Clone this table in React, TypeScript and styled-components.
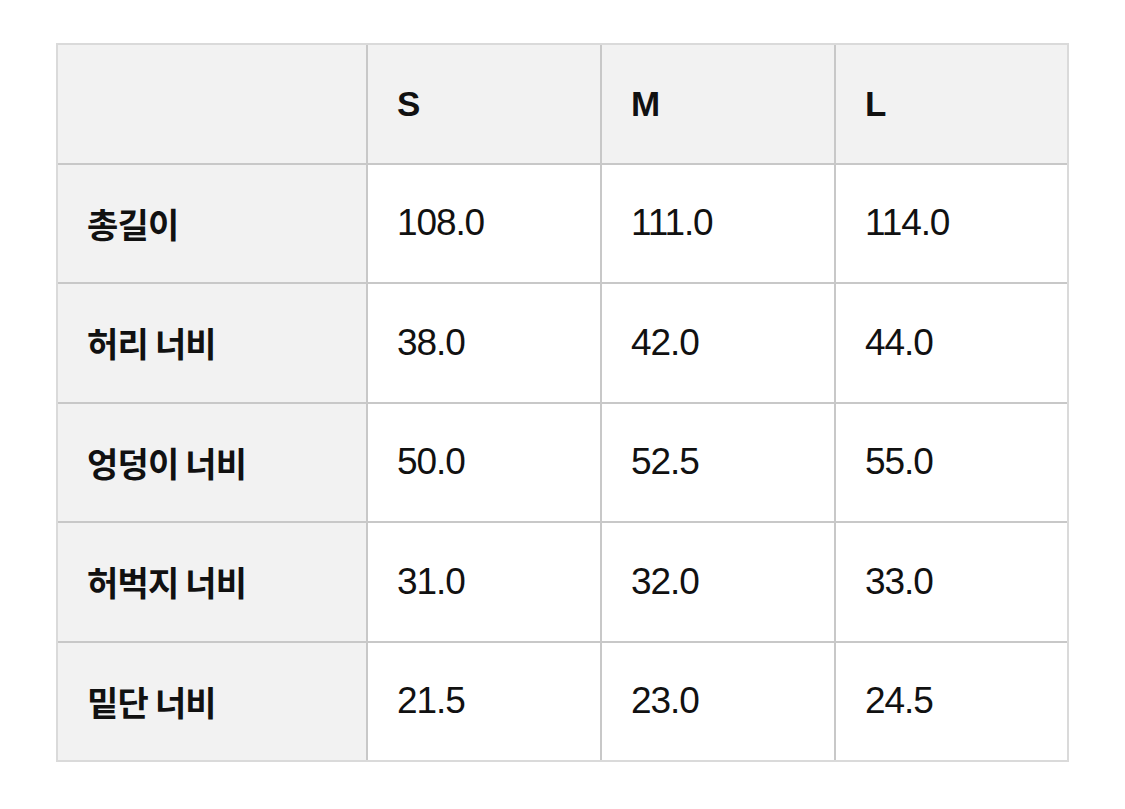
import React from "react";
import styled, { createGlobalStyle } from "styled-components";

const GlobalStyle = createGlobalStyle`
  html, body {
    margin: 0;
    padding: 0;
    background: #ffffff;
  }
  body {
    font-family: "Liberation Sans", "Noto Sans CJK KR", sans-serif;
    color: #111111;
  }
`;

const Page = styled.div`
  padding: 43px 0 0 56px;
  width: 1125px;
  height: 809px;
  box-sizing: border-box;
`;

const Grid = styled.div`
  display: grid;
  grid-template-columns: 308px 232px 232px 231px;
  grid-auto-rows: 117.5px;
  gap: 2px;
  width: max-content;
  background: #c8c8c8;
  border: 2px solid #dadada;
`;

const Cell = styled.div<{ $shaded?: boolean }>`
  display: flex;
  align-items: center;
  padding-left: 29px;
  background: ${(p) => (p.$shaded ? "#f2f2f2" : "#ffffff")};
`;

const SizeLabel = styled.span`
  font-family: "Liberation Sans", sans-serif;
  font-weight: 700;
  font-size: 35px;
`;

const RowLabel = styled.span`
  font-family: "Noto Sans CJK KR", sans-serif;
  font-weight: 700;
  font-size: 34px;
  letter-spacing: -0.8px;
`;

const Value = styled.span`
  font-family: "Liberation Sans", sans-serif;
  font-weight: 400;
  font-size: 37px;
  letter-spacing: -1.1px;
`;

const sizes = ["S", "M", "L"];

const rows: { label: string; values: string[] }[] = [
  { label: "총길이", values: ["108.0", "111.0", "114.0"] },
  { label: "허리 너비", values: ["38.0", "42.0", "44.0"] },
  { label: "엉덩이 너비", values: ["50.0", "52.5", "55.0"] },
  { label: "허벅지 너비", values: ["31.0", "32.0", "33.0"] },
  { label: "밑단 너비", values: ["21.5", "23.0", "24.5"] },
];

export default function App() {
  return (
    <>
      <GlobalStyle />
      <Page>
        <Grid>
          <Cell $shaded />
          {sizes.map((s) => (
            <Cell $shaded key={s}>
              <SizeLabel>{s}</SizeLabel>
            </Cell>
          ))}
          {rows.map((r) => (
            <React.Fragment key={r.label}>
              <Cell $shaded>
                <RowLabel>{r.label}</RowLabel>
              </Cell>
              {r.values.map((v, i) => (
                <Cell key={i}>
                  <Value>{v}</Value>
                </Cell>
              ))}
            </React.Fragment>
          ))}
        </Grid>
      </Page>
    </>
  );
}
